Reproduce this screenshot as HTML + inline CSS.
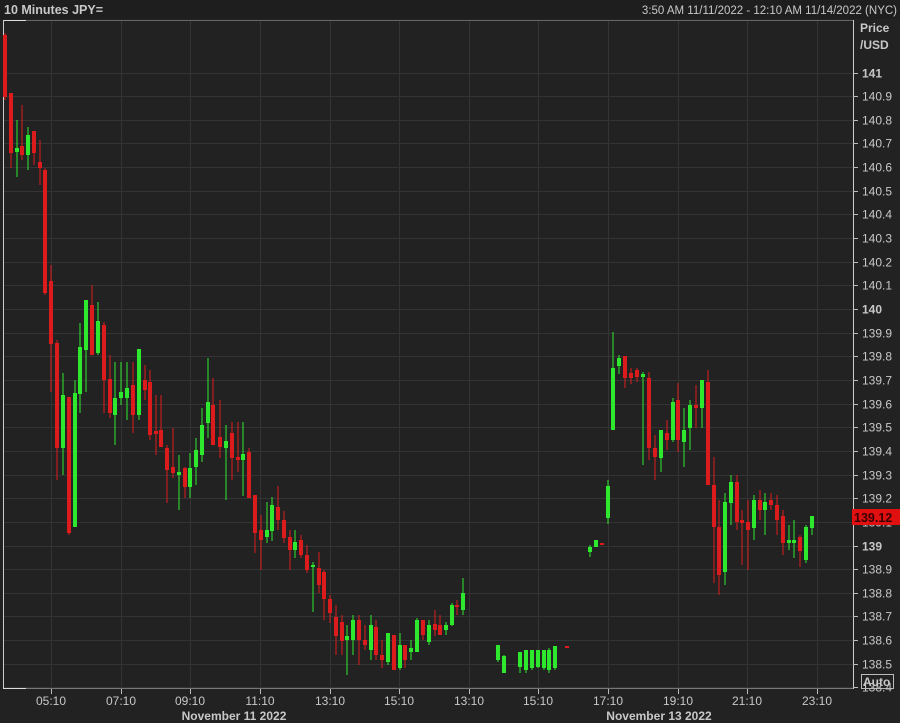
<!DOCTYPE html>
<html><head><meta charset="utf-8"><style>
body{margin:0;width:900px;height:723px;background:#222;overflow:hidden;font-family:"Liberation Sans",Tahoma,sans-serif;}
svg{position:absolute;left:0;top:0}
</style></head><body>
<svg id="s" width="900" height="723" xmlns="http://www.w3.org/2000/svg" font-family="Liberation Sans, sans-serif">
<rect width="900" height="723" fill="#222"/>
<rect x="0" y="0" width="900" height="19" fill="#1e1e1e"/>
<text x="4" y="14" font-size="12.5" font-weight="bold" fill="#c8c8c8">10 Minutes JPY=</text>
<text x="897" y="14" font-size="11.5" fill="#c8c8c8" text-anchor="end">3:50 AM 11/11/2022 - 12:10 AM 11/14/2022 (NYC)</text>
<g id="grid" stroke="#343434" stroke-width="1"></g>
<line x1="3" y1="20.5" x2="853" y2="20.5" stroke="#666"/>
<line x1="3" y1="20.5" x2="26" y2="20.5" stroke="#ddd"/>
<line x1="3.5" y1="20" x2="3.5" y2="689" stroke="#ccc"/>
<line x1="3" y1="688.5" x2="853" y2="688.5" stroke="#777"/>
<line x1="3" y1="688.5" x2="26" y2="688.5" stroke="#ddd"/>
<line x1="853.5" y1="20" x2="853.5" y2="689" stroke="#ccc"/>
<g id="c"></g>
<g id="ax" font-size="12" fill="#c8c8c8"></g>
<text x="860" y="32" font-size="12" font-weight="bold" fill="#c8c8c8">Price</text>
<text x="860" y="49" font-size="12" font-weight="bold" fill="#c8c8c8">/USD</text>
<rect x="852" y="509" width="48" height="16" fill="#e01010"/>
<text x="854" y="522" font-size="12.5" font-weight="bold" fill="#3a0000">139.12</text>
<rect x="861.5" y="674.5" width="32" height="14" fill="none" stroke="#bbb"/>
<text x="863" y="686" font-size="12" font-weight="bold" fill="#c8c8c8">Auto</text>
<text x="234" y="720" font-size="12" font-weight="bold" fill="#c8c8c8" text-anchor="middle">November 11 2022</text>
<text x="659" y="720" font-size="12" font-weight="bold" fill="#c8c8c8" text-anchor="middle">November 13 2022</text>
</svg>
<script>
var NS="http://www.w3.org/2000/svg";
function el(p,t,a,txt){var e=document.createElementNS(NS,t);for(var k in a)e.setAttribute(k,a[k]);if(txt)e.textContent=txt;p.appendChild(e);return e;}
var g=document.getElementById('grid'),ax=document.getElementById('ax'),c=document.getElementById('c');
var xs=[51,121,190,260,330,399,469,538,608,678,747,817],tl=["05:10","07:10","09:10","11:10","13:10","15:10","13:10","15:10","17:10","19:10","21:10","23:10"];
xs.forEach(function(x,i){el(g,'line',{x1:x+.5,y1:21,x2:x+.5,y2:688});el(ax,'line',{x1:x+.5,y1:689,x2:x+.5,y2:694,stroke:'#bbb'});el(ax,'text',{x:x,y:705,'text-anchor':'middle'},tl[i]);});
for(var k=0;k<=26;k++){var p=141.0-k*0.1;var y=309-(p-140)*236.5;y=Math.round(y)+.5;el(g,'line',{x1:4,y1:y,x2:853,y2:y});
el(ax,'line',{x1:853,y1:y,x2:858,y2:y,stroke:'#bbb'});var lab=(Math.abs(p-Math.round(p))<0.01)?String(Math.round(p)):p.toFixed(1);
var t=el(ax,'text',{x:862,y:y+4},lab);if(lab.length==3)t.setAttribute('font-weight','bold');}
var d=[
[5,35,97,33,100,'r'],[11,93,153,93,168,'r'],[17,148,152,120,177,'g'],[22,146,155,105,160,'r'],[28,135,155,127,170,'g'],[34,131,153,131,165,'r'],[40,162,168,140,185,'r'],[45,170,293,168,295,'r'],[51,281,344,265,392,'r'],[57,343,448,340,480,'r'],[63,395,448,373,475,'g'],[69,397,533,397,535,'r'],[75,393,527,380,527,'g'],[80,347,394,323,413,'g'],[86,300,350,300,392,'g'],[92,305,355,285,355,'r'],[98,321,353,302,355,'g'],[104,325,380,322,413,'r'],[110,379,413,355,418,'r'],[115,398,415,362,445,'g'],[121,392,398,362,405,'g'],[127,388,398,362,420,'g'],[133,385,415,362,433,'r'],[139,349,415,349,420,'g'],
[145,380,390,365,400,'r'],[150,382,435,370,440,'r'],[156,431,434,395,455,'r'],[161,430,447,395,447,'r'],[167,448,470,445,503,'r'],[173,467,473,428,478,'r'],[179,472,475,455,510,'g'],[185,468,487,467,498,'r'],[190,468,487,453,498,'g'],[196,450,467,438,485,'g'],[202,425,455,408,462,'g'],[208,402,423,358,438,'g'],[213,405,445,378,445,'r'],[220,437,447,400,458,'r'],[226,441,448,425,500,'g'],[232,433,458,422,480,'r'],[238,457,460,422,472,'r'],
[243,454,460,422,496,'g'],[249,452,498,448,498,'r'],[255,495,533,495,553,'r'],[261,530,540,515,570,'r'],[267,530,537,502,543,'g'],[272,505,531,497,541,'g'],[278,507,520,486,530,'r'],[284,520,538,511,543,'r'],[290,537,550,530,570,'r'],[295,542,550,530,558,'g'],[301,540,555,535,558,'r'],[307,555,570,545,573,'r'],[313,565,567,562,612,'g'],[319,568,585,552,593,'r'],[324,572,599,570,620,'r'],[330,599,613,595,623,'r'],[336,617,636,605,655,'r'],[342,622,641,615,655,'r'],[347,636,640,625,675,'g'],[353,620,640,615,655,'g'],[359,620,640,615,665,'r'],[365,640,645,625,650,'r'],[371,625,650,615,660,'g'],[376,627,655,620,660,'r'],[382,655,660,640,668,'r'],[388,633,662,633,665,'g'],[394,635,670,635,670,'r'],[400,645,668,633,670,'g'],[405,645,660,645,668,'r'],[411,648,652,640,660,'g'],[417,620,652,618,652,'g'],[423,620,635,620,640,'r'],[429,625,642,620,645,'g'],[435,624,630,610,636,'r'],[440,625,635,615,635,'r'],[446,625,630,622,635,'g'],[452,605,625,603,626,'g'],[457,605,607,600,615,'r'],[463,593,610,578,615,'g'],
[498,645,660,645,662,'g'],[504,656,673,655,673,'g'],[520,652,667,652,673,'g'],[526,650,670,650,673,'g'],[532,650,668,650,670,'g'],[538,650,667,650,668,'g'],[544,650,668,650,670,'g'],[549,650,670,648,673,'g'],[555,646,668,646,670,'g'],[567,646,648,646,648,'r'],
[590,547,552,545,557,'g'],[596,540,547,540,547,'g'],[602,543,545,543,545,'r'],[608,486,518,480,524,'g'],[613,368,430,332,430,'g'],[619,358,366,355,374,'g'],[625,356,378,356,388,'r'],[631,373,378,368,384,'r'],[637,370,377,368,382,'r'],[643,374,377,372,465,'g'],[649,378,448,372,460,'r'],[655,448,457,435,480,'r'],[661,430,458,430,472,'g'],[667,433,440,420,450,'r'],[673,402,440,398,442,'g'],[678,400,440,383,452,'r'],[684,430,442,408,467,'g'],[690,405,428,400,450,'g'],[696,405,408,385,428,'r'],[702,380,408,380,428,'g'],[708,382,485,370,485,'r'],[714,485,527,457,583,'r'],[719,527,575,500,595,'r'],[725,502,572,493,585,'g'],[731,482,503,475,525,'g'],[737,482,522,475,530,'r'],[742,520,523,510,565,'r'],[748,522,530,500,570,'r'],[754,500,528,495,540,'g'],[760,500,510,490,520,'r'],[765,502,510,493,535,'g'],[771,500,505,493,510,'r'],[777,505,520,495,535,'r'],[783,516,543,510,555,'r'],[789,540,543,525,550,'g'],[794,540,543,520,558,'g'],[800,537,551,535,567,'r'],[806,527,560,525,563,'g'],[812,516,528,516,535,'g']];
d.forEach(function(a){var col=a[5]=='g'?'#2ee82e':'#dc1c1c';
el(c,'rect',{x:a[0]-0.5,y:a[3],width:1,height:Math.max(1,a[4]-a[3]),fill:col});
el(c,'rect',{x:a[0]-2,y:a[1],width:4,height:Math.max(2,a[2]-a[1]),fill:col});});
</script>
</body></html>
